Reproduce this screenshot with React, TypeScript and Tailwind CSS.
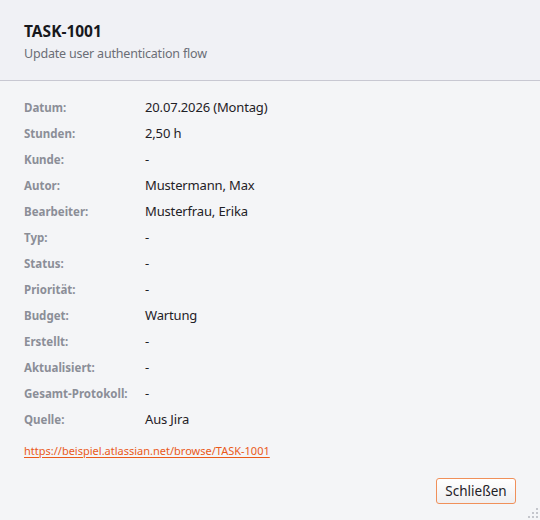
import React from "react";

type Field = { label: string; value: string };

const fields: Field[] = [
  { label: "Datum:", value: "20.07.2026 (Montag)" },
  { label: "Stunden:", value: "2,50 h" },
  { label: "Kunde:", value: "-" },
  { label: "Autor:", value: "Mustermann, Max" },
  { label: "Bearbeiter:", value: "Musterfrau, Erika" },
  { label: "Typ:", value: "-" },
  { label: "Status:", value: "-" },
  { label: "Priorität:", value: "-" },
  { label: "Budget:", value: "Wartung" },
  { label: "Erstellt:", value: "-" },
  { label: "Aktualisiert:", value: "-" },
  { label: "Gesamt-Protokoll:", value: "-" },
  { label: "Quelle:", value: "Aus Jira" },
];

function ResizeGrip() {
  const dots = [
    [8, 0],
    [4, 4],
    [8, 4],
    [0, 8],
    [4, 8],
    [8, 8],
  ];
  return (
    <svg
      className="absolute right-[2px] bottom-[2px]"
      width="10"
      height="10"
      viewBox="0 0 10 10"
    >
      {dots.map(([x, y], i) => (
        <rect key={i} x={x} y={y} width="2" height="2" fill="#c4c6cc" />
      ))}
    </svg>
  );
}

export default function App() {
  return (
    <div
      className="relative w-[540px] h-[520px] bg-[#f4f5f7] flex flex-col text-[#1f2126]"
      style={{ fontFamily: '"Noto Sans", "Open Sans", sans-serif' }}
    >
      {/* Header */}
      <div className="h-[81px] bg-[#f0f1f5] border-b border-[#c8c8d2] px-6 pt-[20px]">
        <h1 className="text-[15.5px] font-bold leading-[22px] text-[#17181c]">
          TASK-1001
        </h1>
        <p className="mt-[3px] text-[12.5px] tracking-[-0.2px] leading-[18px] text-[#6b6e76]">
          Update user authentication flow
        </p>
      </div>

      {/* Details */}
      <div className="flex-1 px-6 pt-[14px]">
        <div className="flex flex-col">
          {fields.map((f) => (
            <div key={f.label} className="flex items-center h-[26px]">
              <span className="w-[121px] shrink-0 text-[11.5px] font-bold text-[#8b8e97]">
                {f.label}
              </span>
              <span className="text-[13px] tracking-[-0.15px] text-[#1f2126]">
                {f.value}
              </span>
            </div>
          ))}
        </div>

        <a
          href="#"
          className="mt-[10px] inline-block text-[11px] text-[#ea5a1a] underline underline-offset-2"
        >
          https://beispiel.atlassian.net/browse/TASK-1001
        </a>
      </div>

      {/* Footer */}
      <div className="flex justify-end px-6 pb-[16px]">
        <button className="h-[26px] w-[80px] rounded-[3px] border border-[#f0905a] bg-gradient-to-b from-white to-[#efeff1] text-[13.5px] text-[#1f2126]">
          Schließen
        </button>
      </div>

      <ResizeGrip />
    </div>
  );
}
